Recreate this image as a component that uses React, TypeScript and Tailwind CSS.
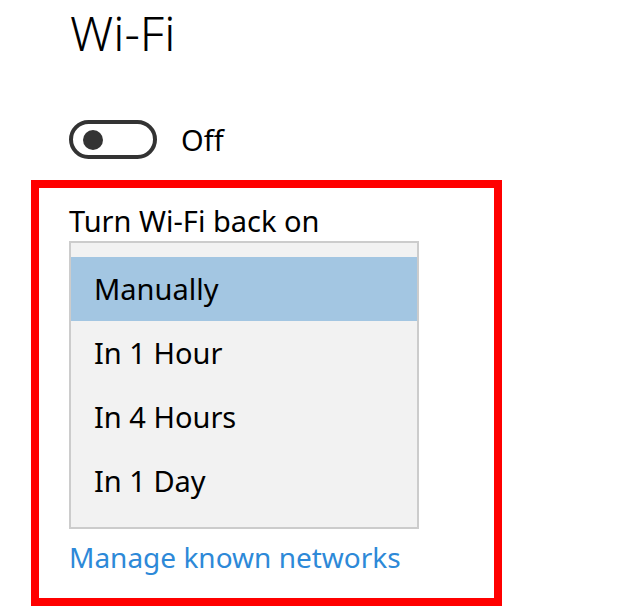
const options = ['Manually', 'In 1 Hour', 'In 4 Hours', 'In 1 Day'];

export default function App() {
  const selected = 0;

  return (
    <div
      className="h-[610px] w-[640px] overflow-hidden bg-white pl-[31px] text-black"
      style={{ fontFamily: '"Noto Sans", "Open Sans", sans-serif' }}
    >
      <h1 className="pl-[39px] pt-[5px] text-[48px] font-light leading-[56px]">Wi-Fi</h1>

      <div className="mt-[59px] flex items-center gap-[24px] pl-[38px]">
        <div className="flex h-[39px] w-[88px] items-center rounded-full border-[4px] border-[#333333] pl-[10px]">
          <div className="h-[20px] w-[20px] rounded-full bg-[#333333]" />
        </div>
        <span className="text-[29px] leading-none">Off</span>
      </div>

      <div className="mt-[21px] h-[426px] w-[471px] border-[8px] border-[#ff0000] px-[30px] pt-[13px]">
        <div className="text-[29px] leading-[40px]">Turn Wi-Fi back on</div>
        <div className="w-[350px] border-[2px] border-[#cccccc] bg-[#f2f2f2] py-[14px]">
          {options.map((o, i) => (
            <div
              key={o}
              className={`flex h-[64px] items-center pl-[23px] text-[29px] ${i === selected ? 'bg-[#a3c6e2]' : ''}`}
            >
              {o}
            </div>
          ))}
        </div>
        <div className="mt-[8px] text-[28px] leading-[40px] text-[#2d89d8]">Manage known networks</div>
      </div>
    </div>
  );
}
